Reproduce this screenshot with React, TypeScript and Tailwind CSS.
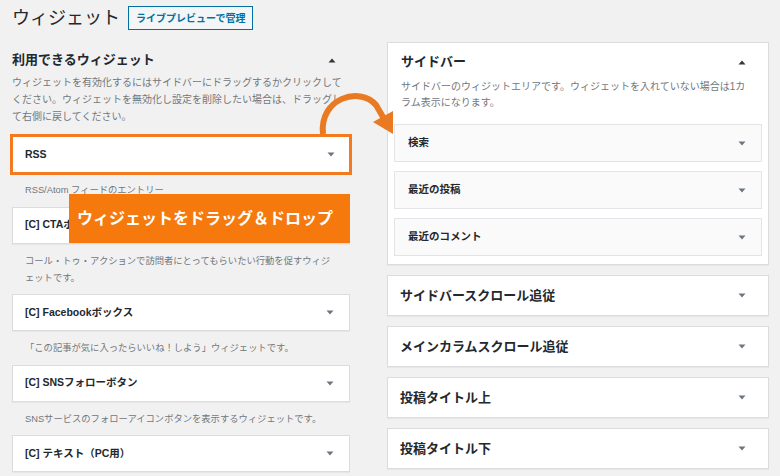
import React from 'react';

// Available widgets on the left side
const available = [
  { title: 'RSS', desc: ['RSS/Atom フィードのエントリー'], active: true },
  { title: '[C] CTAボックス', desc: ['コール・トゥ・アクションで訪問者にとってもらいたい行動を促すウィジ', 'ェットです。'] },
  { title: '[C] Facebookボックス', desc: ['「この記事が気に入ったらいいね！しよう」ウィジェットです。'] },
  { title: '[C] SNSフォローボタン', desc: ['SNSサービスのフォローアイコンボタンを表示するウィジェットです。'] },
  { title: '[C] テキスト（PC用）', desc: ['PC表示の時だけ表示されるテキストウィジェットです。'] },
];

const sidebarWidgets = ['検索', '最近の投稿', '最近のコメント'];

const areas = ['サイドバースクロール追従', 'メインカラムスクロール追従', '投稿タイトル上', '投稿タイトル下'];

function Caret({ up }: { up?: boolean }) {
  return (
    <svg width="8" height="5" viewBox="0 0 8 5" className="shrink-0">
      <path d={up ? 'M0.5 4.5 L4 0.5 L7.5 4.5 Z' : 'M0.5 0.5 L7.5 0.5 L4 4.5 Z'} fill={up ? '#32373c' : '#6c7781'} />
    </svg>
  );
}

function WidgetItem({ title, active }: { title: string; active?: boolean }) {
  if (active) {
    return (
      <div className="-mx-[2px] -my-[2px] flex h-[41px] items-center justify-between border-[3px] border-[#f47a1f] bg-white pl-[12px] pr-[14px]">
        <span className="text-[10.5px] font-bold">{title}</span>
        <Caret />
      </div>
    );
  }
  return (
    <div className="flex h-[37px] items-center justify-between border border-[#dcdcde] bg-white pl-[12px] pr-[15px] shadow-[0_1px_1px_rgba(0,0,0,0.04)]">
      <span className="text-[10.5px] font-bold">{title}</span>
      <Caret />
    </div>
  );
}

export default function App() {
  return (
    <div className="relative h-[476px] w-[780px] overflow-hidden bg-[#f1f1f1] font-['Liberation_Sans','Noto_Sans_CJK_JP',sans-serif] text-[#23282d]">
      <div className="pl-[12px] pr-[11px] pt-[6px]">
        <div className="flex h-[24px] items-center gap-[8px]">
          <h1 className="text-[18px] font-normal leading-none">ウィジェット</h1>
          <button className="h-[24px] border border-[#0071a1] bg-[#f3f5f6] px-[7px] text-[10px] font-bold text-[#0071a1]">
            ライブプレビューで管理
          </button>
        </div>

        <div className="mt-[12px] flex gap-[37px]">
          {/* left column */}
          <div className="w-[338px] shrink-0">
            <div className="mt-[8px] flex h-[20px] items-center justify-between pr-[14px]">
              <h2 className="text-[13px] font-bold">利用できるウィジェット</h2>
              <Caret up />
            </div>
            <p className="mt-[4px] text-[10px] leading-[17px] text-[#72777c]">
              ウィジェットを有効化するにはサイドバーにドラッグするかクリックして
              <br />
              ください。ウィジェットを無効化し設定を削除したい場合は、ドラッグし
              <br />
              て右側に戻してください。
            </p>

            <div className="mt-[11px]">
              {available.map((w) => (
                <div key={w.title}>
                  <WidgetItem title={w.title} active={w.active} />
                  <p className="whitespace-nowrap pb-[7.5px] pl-[13px] pt-[9px] text-[9.3px] leading-[17px] text-[#72777c]">
                    {w.desc.map((line, i) => (
                      <React.Fragment key={i}>
                        {i > 0 && <br />}
                        {line}
                      </React.Fragment>
                    ))}
                  </p>
                </div>
              ))}
            </div>
          </div>

          {/* right column */}
          <div className="w-[382px] shrink-0">
            <div className="border border-[#dcdcde] bg-white px-[6px] pb-[8px] pt-[9px] shadow-[0_1px_1px_rgba(0,0,0,0.04)]">
              <div className="flex h-[20px] items-center justify-between pl-[7px] pr-[16px]">
                <h3 className="text-[13px] font-bold">サイドバー</h3>
                <Caret up />
              </div>
              <p className="mt-[7px] pl-[7px] text-[10px] leading-[16px] text-[#72777c]">
                サイドバーのウィジットエリアです。ウィジェットを入れていない場合は1カ
                <br />
                ラム表示になります。
              </p>
              <div className="mt-[13px] flex flex-col gap-[9px]">
                {sidebarWidgets.map((t) => (
                  <div
                    key={t}
                    className="flex h-[38px] items-center justify-between border border-[#e2e4e7] bg-[#fafafa] pl-[13px] pr-[15px]"
                  >
                    <span className="text-[10.5px] font-bold">{t}</span>
                    <Caret />
                  </div>
                ))}
              </div>
            </div>

            <div className="mt-[10px] flex flex-col gap-[10px]">
              {areas.map((t) => (
                <div
                  key={t}
                  className="flex h-[41px] items-center justify-between border border-[#dcdcde] bg-white pl-[12px] pr-[22px] shadow-[0_1px_1px_rgba(0,0,0,0.04)]"
                >
                  <span className="text-[13px] font-bold">{t}</span>
                  <Caret />
                </div>
              ))}
            </div>
          </div>
        </div>
      </div>

      {/* drag & drop callout */}
      <div className="absolute left-[69px] top-[194px] flex h-[49px] w-[281px] items-center bg-[#f6790d] pl-[8px]">
        <span className="text-[16px] font-bold text-white">ウィジェットをドラッグ＆ドロップ</span>
      </div>

      <svg className="pointer-events-none absolute left-0 top-0" width="780" height="476">
        <path d="M323 134 C 319 98, 360 86, 376 105 L 383 117" fill="none" stroke="#ea7a22" strokeWidth="6" />
        <polygon points="373,122 393,111 393,134" fill="#ea7a22" />
      </svg>
    </div>
  );
}
